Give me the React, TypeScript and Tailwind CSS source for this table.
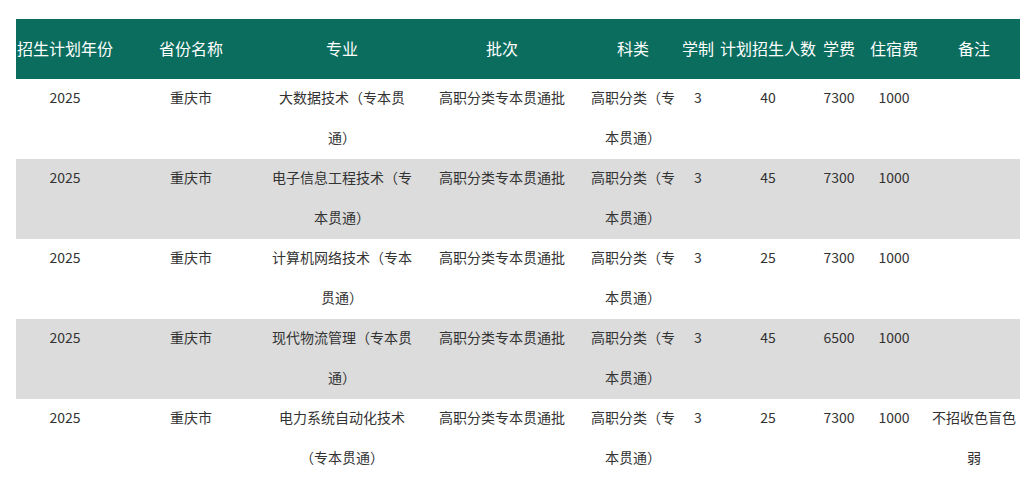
import React from "react";

type Row = {
  year: string;
  province: string;
  major: string;
  batch: string;
  category: string;
  years: string;
  count: string;
  fee: string;
  dorm: string;
  note: string;
};

const rows: Row[] = [
  { year: "2025", province: "重庆市", major: "大数据技术（专本贯通）", batch: "高职分类专本贯通批", category: "高职分类（专本贯通）", years: "3", count: "40", fee: "7300", dorm: "1000", note: "" },
  { year: "2025", province: "重庆市", major: "电子信息工程技术（专本贯通）", batch: "高职分类专本贯通批", category: "高职分类（专本贯通）", years: "3", count: "45", fee: "7300", dorm: "1000", note: "" },
  { year: "2025", province: "重庆市", major: "计算机网络技术（专本贯通）", batch: "高职分类专本贯通批", category: "高职分类（专本贯通）", years: "3", count: "25", fee: "7300", dorm: "1000", note: "" },
  { year: "2025", province: "重庆市", major: "现代物流管理（专本贯通）", batch: "高职分类专本贯通批", category: "高职分类（专本贯通）", years: "3", count: "45", fee: "6500", dorm: "1000", note: "" },
  { year: "2025", province: "重庆市", major: "电力系统自动化技术（专本贯通）", batch: "高职分类专本贯通批", category: "高职分类（专本贯通）", years: "3", count: "25", fee: "7300", dorm: "1000", note: "不招收色盲色弱" },
];

const headers = ["招生计划年份", "省份名称", "专业", "批次", "科类", "学制", "计划招生人数", "学费", "住宿费", "备注"];
// column widths measured off the screenshot
const widths = [98, 154, 148, 172, 90, 40, 100, 42, 68, 92];

const App: React.FC = () => {
  return (
    <div
      className="bg-white pt-[19px] px-4 min-h-screen [text-spacing-trim:space-all]"
      style={{ fontFamily: '"Noto Sans CJK SC", "Noto Sans", sans-serif' }}
    >
      <table className="table-fixed border-collapse w-[1004px]">
        <colgroup>
          {widths.map((w, i) => (
            <col key={i} style={{ width: w }} />
          ))}
        </colgroup>
        <thead>
          <tr className="bg-[#0b6d5e] h-[60px]">
            {headers.map((h) => (
              <th key={h} className="p-0 pb-[2px] text-white text-[16px] font-normal text-center align-middle whitespace-nowrap">
                {h}
              </th>
            ))}
          </tr>
        </thead>
        <tbody>
          {rows.map((r, i) => (
            <tr key={i} className={i % 2 === 1 ? "bg-[#dcdcdc]" : "bg-white"}>
              {[r.year, r.province, r.major, r.batch, r.category, r.years, r.count, r.fee, r.dorm, r.note].map((v, j) => (
                <td key={j} className="p-0 text-[14px] leading-[40px] text-[#333333] text-center align-top h-[80px]">
                  <div className="-mt-[2px] pb-[2px]">{v}</div>
                </td>
              ))}
            </tr>
          ))}
        </tbody>
      </table>
    </div>
  );
};

export default App;
